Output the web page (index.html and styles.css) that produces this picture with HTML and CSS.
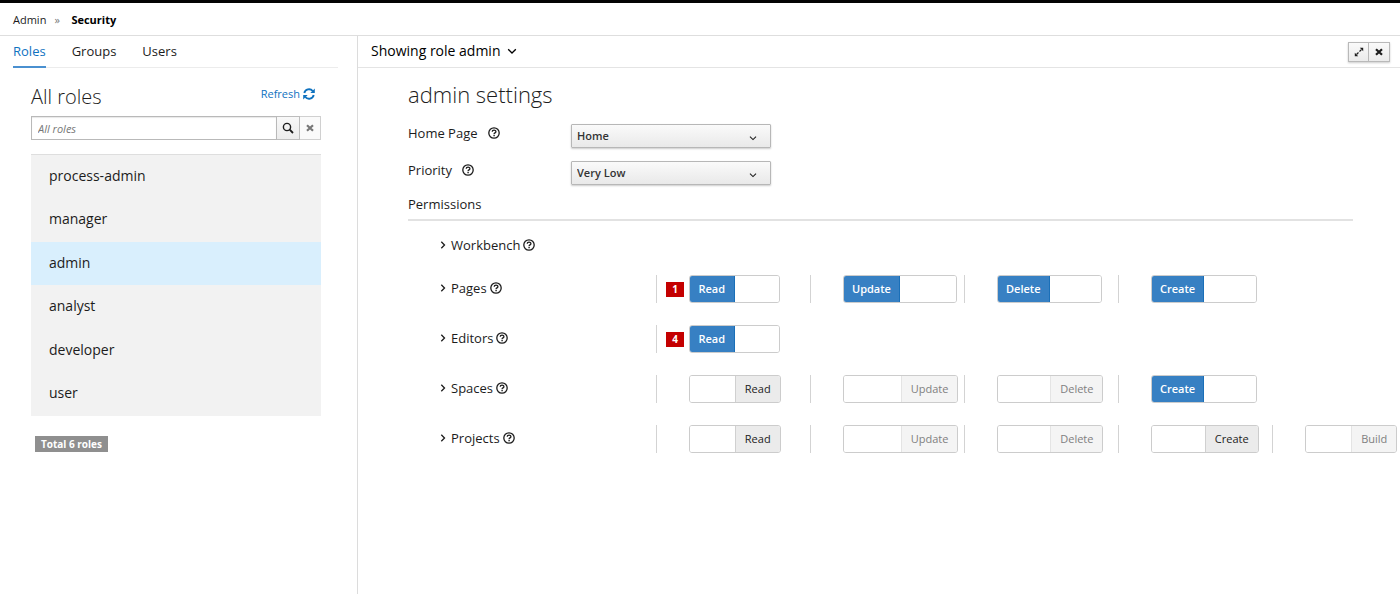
FILE: index.html
```html
<!DOCTYPE html>
<html lang="en">
<head>
<meta charset="utf-8">
<title>Security</title>
<link rel="stylesheet" href="styles.css">
</head>
<body>
<svg class="sprite" aria-hidden="true">
  <symbol id="help" viewBox="0 0 12 12"><circle cx="6" cy="6" r="5.2" fill="none" stroke="currentColor" stroke-width="1.3"/><path d="M4.2 4.8C4.3 2.7 7.9 2.7 7.9 4.7C7.9 5.9 6.1 5.9 6.1 7.1" fill="none" stroke="currentColor" stroke-width="1.3"/><path d="M5.4 7.8h1.4v1.4H5.4z" fill="currentColor"/></symbol>
  <symbol id="down" viewBox="0 0 10 10"><path d="M1.2 3.2L5 7L8.800 3.200" fill="none" stroke="currentColor" stroke-width="1.300"/></symbol>
  <symbol id="right" viewBox="0 0 10 10"><path d="M3.300 1.800L6.500 5L3.300 8.200" fill="none" stroke="currentColor" stroke-width="1.300"/></symbol>
  <symbol id="close" viewBox="0 0 10 10"><path d="M2 2.200L8 7.800M8 2.200L2 7.800" fill="none" stroke="currentColor" stroke-width="2.200"/></symbol>
</svg>
<header class="topbar">
  <nav class="breadcrumb" aria-label="Breadcrumb"><a href="#">Admin</a><span class="crumb-sep">»</span><strong>Security</strong></nav>
</header>
<div class="layout">
  <aside class="sidebar">
    <nav class="tabs"><a class="tab tab-active" href="#">Roles</a><a class="tab" href="#">Groups</a><a class="tab" href="#">Users</a></nav>
    <section class="roles">
      <div class="roles-head">
        <h2 class="title">All roles</h2>
        <a class="refresh" href="#">Refresh<svg width="12" height="12" viewBox="0 0 12 12"><path d="M1.300 5A4.800 4.800 0 0 1 9.700 3M10.700 7A4.800 4.800 0 0 1 2.300 9" fill="none" stroke="currentColor" stroke-width="1.900"/><path d="M11.800 .5V5H7.300zM.2 11.500V7h4.500z" fill="currentColor"/></svg></a>
      </div>
      <form class="search">
        <input class="search-input" type="text" placeholder="All roles" aria-label="All roles">
        <button class="search-btn" type="button" aria-label="Search"><svg width="12" height="12" viewBox="0 0 12 12"><circle cx="5" cy="5" r="3.600" fill="none" stroke="currentColor" stroke-width="1.400"/><path d="M7.700 7.700L11 11" stroke="currentColor" stroke-width="1.800"/></svg></button>
        <button class="search-btn clear-btn" type="button" aria-label="Clear"><svg width="10" height="10"><use href="#close"/></svg></button>
      </form>
      <ul class="role-list">
        <li><a class="role" href="#">process-admin</a></li>
        <li><a class="role" href="#">manager</a></li>
        <li><a class="role role-active" href="#">admin</a></li>
        <li><a class="role" href="#">analyst</a></li>
        <li><a class="role" href="#">developer</a></li>
        <li><a class="role" href="#">user</a></li>
      </ul>
      <span class="total">Total 6 roles</span>
    </section>
  </aside>
  <main class="main">
    <div class="panel-head">
      <button class="panel-title" type="button">Showing role admin<svg width="10" height="10"><use href="#down"/></svg></button>
      <div class="panel-tools">
        <button class="tool" type="button" aria-label="Expand"><svg width="10" height="10" viewBox="0 0 10 10"><path d="M2.500 7.500L7.500 2.500" stroke="currentColor" stroke-width="1.200" stroke-dasharray="2.800 1.400"/><path d="M5.800 .8H9.200V4.200zM.8 5.800V9.200H4.200z" fill="currentColor"/></svg></button>
        <button class="tool" type="button" aria-label="Close"><svg width="10" height="10"><use href="#close"/></svg></button>
      </div>
    </div>
    <div class="settings">
      <h1 class="title title-large">admin settings</h1>
      <div class="field">
        <div class="field-label"><label for="home">Home Page</label><svg width="12" height="12"><use href="#help"/></svg></div>
        <div class="select"><select id="home"><option>Home</option></select><svg class="select-arrow" width="8" height="8"><use href="#down"/></svg></div>
      </div>
      <div class="field">
        <div class="field-label"><label for="priority">Priority</label><svg width="12" height="12"><use href="#help"/></svg></div>
        <div class="select"><select id="priority"><option>Very Low</option></select><svg class="select-arrow" width="8" height="8"><use href="#down"/></svg></div>
      </div>
      <h2 class="section">Permissions</h2>
      <div class="permissions">
        <div class="perm">
          <button class="perm-name" type="button"><svg width="10" height="10"><use href="#right"/></svg>Workbench<svg width="12" height="12"><use href="#help"/></svg></button>
        </div>
        <div class="perm">
          <button class="perm-name" type="button"><svg width="10" height="10"><use href="#right"/></svg>Pages<svg width="12" height="12"><use href="#help"/></svg></button>
          <div class="cell"><span class="slot"><span class="badge">1</span></span><label class="toggle on"><input type="checkbox" checked><span>Read</span></label></div>
          <div class="cell"><span class="slot"></span><label class="toggle on"><input type="checkbox" checked><span>Update</span></label></div>
          <div class="cell"><span class="slot"></span><label class="toggle on"><input type="checkbox" checked><span>Delete</span></label></div>
          <div class="cell"><span class="slot"></span><label class="toggle on"><input type="checkbox" checked><span>Create</span></label></div>
        </div>
        <div class="perm">
          <button class="perm-name" type="button"><svg width="10" height="10"><use href="#right"/></svg>Editors<svg width="12" height="12"><use href="#help"/></svg></button>
          <div class="cell"><span class="slot"><span class="badge">4</span></span><label class="toggle on"><input type="checkbox" checked><span>Read</span></label></div>
        </div>
        <div class="perm">
          <button class="perm-name" type="button"><svg width="10" height="10"><use href="#right"/></svg>Spaces<svg width="12" height="12"><use href="#help"/></svg></button>
          <div class="cell"><span class="slot"></span><label class="toggle"><input type="checkbox"><span>Read</span></label></div>
          <div class="cell"><span class="slot"></span><label class="toggle disabled"><input type="checkbox" disabled><span>Update</span></label></div>
          <div class="cell"><span class="slot"></span><label class="toggle disabled"><input type="checkbox" disabled><span>Delete</span></label></div>
          <div class="cell"><span class="slot"></span><label class="toggle on"><input type="checkbox" checked><span>Create</span></label></div>
        </div>
        <div class="perm">
          <button class="perm-name" type="button"><svg width="10" height="10"><use href="#right"/></svg>Projects<svg width="12" height="12"><use href="#help"/></svg></button>
          <div class="cell"><span class="slot"></span><label class="toggle"><input type="checkbox"><span>Read</span></label></div>
          <div class="cell"><span class="slot"></span><label class="toggle disabled"><input type="checkbox" disabled><span>Update</span></label></div>
          <div class="cell"><span class="slot"></span><label class="toggle disabled"><input type="checkbox" disabled><span>Delete</span></label></div>
          <div class="cell"><span class="slot"></span><label class="toggle"><input type="checkbox"><span>Create</span></label></div>
          <div class="cell"><span class="slot"></span><label class="toggle disabled"><input type="checkbox" disabled><span>Build</span></label></div>
        </div>
      </div>
    </div>
  </main>
</div>
</body>
</html>
```

FILE: styles.css
```css
* { box-sizing: border-box; }
body {
  margin: 0;
  min-height: 100vh;
  display: flex;
  flex-direction: column;
  background: #fff;
  color: #1c1c1c;
  font: 13px/20px "Open Sans", sans-serif;
}
a { color: inherit; text-decoration: none; }
h1, h2, ul { margin: 0; padding: 0; font-weight: 400; }
li { list-style: none; }
button, input, select { font: inherit; color: inherit; margin: 0; }
button { padding: 0; border: 0; background: none; cursor: pointer; }
svg { display: block; flex: none; }
.sprite { display: none; }

.topbar { border-top: 3px solid #030303; border-bottom: 1px solid #dedede; }
.breadcrumb { display: flex; align-items: center; height: 32px; padding: 2px 13px 0; font-size: 11px; }
.breadcrumb strong { color: #000; }
.crumb-sep { width: 25px; padding-left: 8px; color: #777; }

.layout { flex: 1; display: flex; }
.sidebar { width: 358px; flex: none; border-right: 1px solid #dcdcdc; padding-left: 13px; }
.tabs { display: flex; gap: 26px; margin-right: 19px; border-bottom: 1px solid #ececec; }
.tab { height: 32px; padding-top: 5px; margin-bottom: -1px; }
.tab-active { color: #0f72bf; border-bottom: 2px solid #4a90d0; }
.roles { padding: 15px 36px 0 18px; }
.roles-head { display: flex; justify-content: space-between; padding-right: 6px; }
.title { font-size: 20px; line-height: 28px; font-weight: 300; }
.refresh { display: flex; align-items: center; gap: 3px; height: 22px; font-size: 11px; color: #0f72bf; }
.search { display: flex; margin-top: 5px; }
.search-input {
  flex: 1;
  min-width: 0;
  height: 24px;
  padding: 0 6px;
  border: 1px solid #b9b9b9;
  box-shadow: inset 0 1px 1px #e8e8e8;
  font-size: 11px;
}
.search-input::placeholder { font-style: italic; color: #777; opacity: 1; }
.search-btn {
  display: grid;
  place-items: center;
  width: 23px;
  border: 1px solid #bdbdbd;
  border-left: 0;
  background: linear-gradient(#f8f8f8, #ececec);
}
.clear-btn { width: 21px; color: #777; background: #fafafa; border-color: #d0d0d0; }
.role-list { margin-top: 14px; border-top: 1px solid #dedede; background: #f2f2f2; }
.role { display: flex; align-items: center; height: 43px; padding: 0 18px 2px; font-size: 14px; }
.role-list li:nth-child(even) .role { height: 44px; }
.role-active { background: #d9effd; }
.total {
  display: inline-block;
  margin: 20px 4px;
  padding: 0 6px;
  background: #8f8f8f;
  color: #fff;
  font-size: 10px;
  font-weight: 700;
  line-height: 16px;
}

.main { flex: 1; min-width: 0; }
.panel-head {
  display: flex;
  align-items: center;
  justify-content: space-between;
  height: 32px;
  padding: 0 10px 0 13px;
  border-bottom: 1px solid #e4e4e4;
}
.panel-title { display: flex; align-items: center; gap: 6px; padding-bottom: 2px; font-size: 14px; color: #000; }
.panel-tools { display: flex; box-shadow: 0 1px 2px #ccc; }
.tool {
  display: grid;
  place-items: center;
  width: 21px;
  height: 20px;
  border: 1px solid #b9b9b9;
  background: linear-gradient(#fafafa, #ebebeb);
}
.tool + .tool { border-left: 0; }

.settings { padding: 12px 47px 0 50px; }
.title-large { font-size: 22px; }
.field { display: flex; height: 24px; margin-top: 13px; }
.title-large + .field { margin-top: 16px; }
.field-label { display: flex; align-items: center; gap: 10px; width: 163px; height: 18px; }
.select { position: relative; width: 200px; }
.select select {
  appearance: none;
  width: 100%;
  height: 24px;
  padding: 0 5px;
  border: 1px solid #b7b7b7;
  border-radius: 1px;
  background: linear-gradient(#fafafa, #e9e9e9);
  box-shadow: 0 1px 2px #ccc;
  font-size: 11px;
  font-weight: 600;
  color: #333;
}
.select-arrow { position: absolute; right: 14px; top: 10px; pointer-events: none; }
.section { margin-top: 9px; padding-bottom: 5px; border-bottom: 2px solid #e2e2e2; font-size: 13px; line-height: 20px; }
.permissions { display: flex; flex-direction: column; gap: 22px; padding: 11px 0 0 30px; }
.perm { display: flex; }
.perm + .perm { height: 28px; }
.perm:first-child { margin-bottom: -5px; }
.perm-name { display: flex; align-items: center; gap: 3px; width: 218px; height: 26px; flex: none; }
.cell { display: flex; flex: none; width: 154px; height: 28px; border-left: 1px solid #d3d3d3; }
.slot { display: flex; align-items: center; width: 32px; padding-left: 9px; }
.badge {
  width: 18px;
  background: #c40000;
  color: #fff;
  font-size: 10px;
  font-weight: 700;
  line-height: 15px;
  text-align: center;
}
.toggle {
  display: inline-grid;
  grid-template-columns: 1fr 1fr;
  overflow: hidden;
  min-width: 91px;
  border: 1px solid #ccc;
  border-radius: 3px;
  font-size: 11px;
  cursor: pointer;
}
.toggle input { appearance: none; width: 100%; background: #fff; }
.toggle span { padding: 0 9px; border-left: 1px solid #d0d0d0; background: #ebebeb; line-height: 26px; text-align: center; }
.toggle.on span { order: -1; padding: 0 8px; border-left: 0; border-right: 1px solid #1a6fb8; background: #3780c3; color: #fff; font-weight: 600; }
.toggle.disabled span { background: #f4f4f4; border-color: #e4e4e4; color: #808080; }
```
